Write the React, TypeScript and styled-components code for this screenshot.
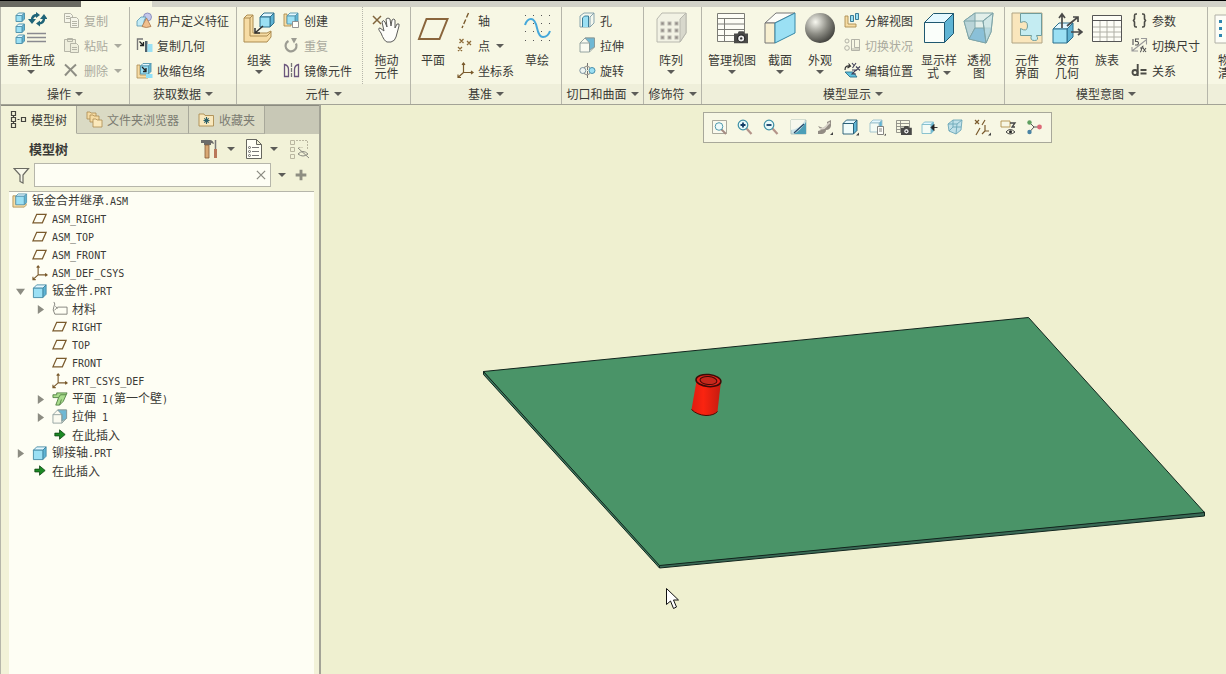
import React from 'react';
import styled, { createGlobalStyle, css } from 'styled-components';

const c = {
  ribbon: '#f7f7e4',
  ribbonLabel: '#efefda',
  canvas: '#eff0d0',
  panel: '#f2f2d8',
  tree: '#fefef4',
  text: '#3a3a36',
  muted: '#aaaa9e',
  line: '#b6b6aa',
  blue: '#9be0f4',
  blueDark: '#2b6f8c',
  gold: '#f6dca4',
  goldDark: '#ac8c50',
  brown: '#7a5a2c',
};

const Global = createGlobalStyle`
  *, *::before, *::after { box-sizing: border-box; }
  body { margin: 0; background: ${c.canvas}; color: ${c.text}; font: 12px/16px "Noto Sans CJK SC", sans-serif; }
  button, input { font: inherit; color: inherit; margin: 0; padding: 0; border: 0; background: none; }
  svg { display: block; flex: none; }
`;

const Page = styled.div`
  display: flex;
  flex-direction: column;
  min-height: 100vh;
  overflow: hidden;
`;
const Strip = styled.div`
  display: flex;
  height: 7px;
  background: #d2d2c8;
  border-top: 1px solid #000;
`;
const StripPart = styled.div<{ $w: number; $bg: string }>`
  width: ${p => p.$w}px;
  background: ${p => p.$bg};
`;
const Ribbon = styled.div`
  display: flex;
  height: 98px;
  background: ${c.ribbon};
  border-left: 1px solid ${c.line};
  border-bottom: 1px solid #a3a396;
  overflow: hidden;
`;
const GroupBox = styled.section<{ $w: number }>`
  flex: none;
  display: flex;
  flex-direction: column;
  width: ${p => p.$w}px;
  border-right: 1px solid ${c.line};
`;
const GroupBody = styled.div<{ $pad: number }>`
  display: flex;
  align-items: flex-start;
  height: 77px;
  padding-left: ${p => p.$pad}px;
`;
const GroupLabel = styled.button`
  display: flex;
  align-items: center;
  justify-content: center;
  gap: 4px;
  height: 20px;
  background: ${c.ribbonLabel};
  white-space: nowrap;
`;
const BigButton = styled.button<{ $w: number; $sep?: boolean }>`
  flex: none;
  display: flex;
  flex-direction: column;
  align-items: center;
  width: ${p => p.$w}px;
  height: 77px;
  padding-top: 5px;
  line-height: 13px;
  white-space: nowrap;
  ${p => p.$sep && css`border-left: 1px dotted ${c.line};`}
`;
const BigLabel = styled.span`
  margin: 9px 0 4px;
`;
const BigLine = styled.span`
  display: flex;
  align-items: center;
  justify-content: center;
  gap: 4px;
`;
const Column = styled.div<{ $w: number }>`
  flex: none;
  width: ${p => p.$w}px;
  margin-left: 4px;
  padding-top: 1px;
`;
const SmallButton = styled.button<{ $off?: boolean }>`
  display: flex;
  align-items: center;
  gap: 4px;
  height: 25px;
  white-space: nowrap;
  ${p => p.$off && css`color: ${c.muted};`}
`;
const Arrow = styled.span<{ $off?: boolean; $ml?: number }>`
  border: 4px solid transparent;
  border-top-color: ${p => (p.$off ? c.muted : '#5c5c58')};
  border-bottom: 0;
  margin-left: ${p => p.$ml || 0}px;
`;

const Work = styled.div`
  flex: 1;
  display: flex;
  min-height: 500px;
`;
const Side = styled.aside`
  flex: none;
  display: flex;
  flex-direction: column;
  width: 321px;
  background: ${c.panel};
  border-left: 1px solid ${c.line};
  border-right: 2px solid #a3a396;
`;
const Tabs = styled.div`
  display: flex;
  height: 29px;
  background: #c8c8b6;
  border-top: 1px solid #8c8c80;
`;
const Tab = styled.button<{ $w: number; $on?: boolean }>`
  display: flex;
  align-items: center;
  justify-content: center;
  gap: 4px;
  width: ${p => p.$w}px;
  color: ${p => (p.$on ? c.text : '#7c7c72')};
  background: ${p => (p.$on ? c.panel : '#dadac4')};
  border-right: 1px solid #a8a89a;
  border-bottom: 1px solid ${p => (p.$on ? c.panel : '#b4b4a6')};
  white-space: nowrap;
`;
const PanelHead = styled.div`
  display: flex;
  align-items: center;
  height: 29px;
  padding: 0 9px 0 28px;
`;
const PanelTitle = styled.h2`
  flex: 1;
  margin: 0;
  font-size: 13px;
  line-height: 16px;
`;
const ToolButton = styled.button`
  display: flex;
  align-items: center;
  gap: 8px;
  margin-left: 11px;
`;
const Search = styled.div`
  display: flex;
  align-items: center;
  height: 24px;
  gap: 2px;
  padding: 0 10px 0 12px;
`;
const Field = styled.label`
  flex: 1;
  display: flex;
  align-items: center;
  height: 24px;
  margin-left: 2px;
  padding-right: 2px;
  background: ${c.tree};
  border: 1px solid ${c.line};
`;
const Input = styled.input`
  flex: 1;
  min-width: 0;
  outline: 0;
`;
const SearchButton = styled.button`
  display: flex;
  align-items: center;
  justify-content: center;
  min-width: 17px;
`;
const Tree = styled.ul`
  flex: 1;
  margin: 4px 5px 0 8px;
  padding: 0;
  list-style: none;
  background: ${c.tree};
  border-top: 1px solid ${c.line};
`;
const TreeRow = styled.li<{ $level: number }>`
  display: flex;
  align-items: center;
  height: 18px;
  padding-left: ${p => (p.$level ? 3 + 20 * (p.$level - 1) : 3)}px;
  white-space: pre;
`;
const Toggle = styled.button`
  display: flex;
  width: 20px;
  padding-left: 4px;
`;
const TreeLabel = styled.span`
  margin-left: 4px;
`;
const Code = styled.span`
  font: 10px/16px "DejaVu Sans Mono", monospace;
`;
const Viewport = styled.main`
  flex: 1;
  position: relative;
  overflow: hidden;
  background: ${c.canvas};
`;
const Scene = styled.svg`
  position: absolute;
  inset: 0;
  width: 100%;
  height: 100%;
`;
const FloatBar = styled.div`
  position: absolute;
  left: 382px;
  top: 7px;
  display: flex;
  width: 349px;
  height: 31px;
  padding: 0 3px 0 2px;
  background: ${c.ribbon};
  border: 1px solid #a8a89a;
`;
const FloatButton = styled.button`
  flex: 1;
  display: flex;
  align-items: center;
  justify-content: center;
`;

const cube = (x: number, y: number, w: number, d: number, front = c.blue, s = c.blueDark) => (
  <g stroke={s} strokeLinejoin="round">
    <path d={`M${x} ${y + d}l${d} ${-d}h${w}l${-d} ${d}z`} fill="#e4f8ff" />
    <path d={`M${x + w} ${y + d}l${d} ${-d}v${w}l${-d} ${d}z`} fill="#5fb4d4" />
    <path d={`M${x} ${y + d}h${w}v${w}h${-w}z`} fill={front} />
  </g>
);
const soft = '#5596ae';
const camera = (
  <g>
    <path d="M0 3h3l1-2h4l1 2h3v8H0z" fill="#4a4a48" />
    <circle cx="6" cy="7" r="3" fill="#eee" stroke="#222" />
    <circle cx="6" cy="7" r="1" fill="#333" />
  </g>
);
const glass = (sign: string) => (
  <g fill="none">
    <path d="M9.500 9.500l5 5.500" stroke="#b4948a" strokeWidth="2.200" />
    <circle cx="6" cy="6" r="4.800" fill="#e8fafa" stroke="#3d8fa5" strokeWidth="1.200" />
    <path d={sign} stroke="#123c66" strokeWidth="1.800" />
  </g>
);

const small: Record<string, React.ReactNode> = {
  copy: <g fill="#f6f6ea" stroke="#aeaea0"><path d="M1.500 1.500h6l2 2v7h-8zM3 4.500h4M3 6.500h5" /><path d="M7.500 5.500h6l2 2v8h-8zM9 9.500h5M9 11.500h5M9 13.500h5" /></g>,
  paste: <g fill="#eeeedc" stroke="#aeaea0"><path d="M1.500 2.500h11v12h-11zM4.500 1.500h5v3h-5z" /><path d="M7.500 6.500h6l2 2v7h-8zM9 10.500h5M9 12.500h5" /></g>,
  del: <path d="M2 2.500C6 6 10 10 13.500 14M13 2.500C9 6 5 10 2 13.500" fill="none" stroke="#8e8e84" strokeWidth="2" />,
  udf: <g><circle cx="11.500" cy="5" r="4" fill="#c4c8ea" stroke="#7d80b4" strokeWidth=".8" /><path d="M1 9l4-4h5l-2 4v5H1z" fill="#c4ecf6" stroke={soft} strokeWidth=".8" /><path d="M10.500 6l4.500 8.500q-5 2-9 0z" fill="#f0bf8e" stroke="#a8764a" strokeWidth=".8" /></g>,
  copyGeo: <g fill="none"><path d="M1.500 13V2H7" stroke="#777" strokeWidth="1.400" /><path d="M3.500 4.500l4 4M7.500 5v3.500H4" stroke="#222" strokeWidth="1.300" /><path d="M9 4h2.500v11H9z" fill="#50606a" /><path d="M11.500 7h5v8h-5z" fill={c.blue} /></g>,
  shrink: <g><path d="M1 3h3v10h8v3H1z" fill={c.gold} stroke={c.goldDark} strokeWidth=".8" />{cube(4.500, 1.500, 8, 2.500, c.blue, soft)}<path d="M6 5l4 4M10 6v3.500H7" stroke="#222" strokeWidth="1.300" fill="none" /><path d="M10 12h6.500v4H10z" fill="#8fe0f8" /></g>,
  create: <g><path d="M1 2h3v9h4v3H1z" fill={c.gold} stroke={c.goldDark} />{cube(4, 1, 8, 3, c.blue, soft)}<path d="M9.500 9.500h6v6h-6z" fill="#fffffa" stroke="#888" /></g>,
  repeat: <g fill="none" stroke="#9c9c92" strokeWidth="2.200"><path d="M13 6.500A5.500 5.500 0 1 1 5.500 4" /><path d="M8 1h6l-3 5.500z" fill="#9c9c92" stroke="none" /></g>,
  mirror: <g fill="none" strokeWidth="1.300"><path d="M1.500 2.500q4 1 4 5v7h-4zM15.500 2.500q-4 1-4 5v7h4z" stroke="#6b567c" /><path d="M8.500 1v15" stroke="#777" strokeDasharray="4 1" /></g>,
  axis: <path d="M11.500 1L5 16" stroke={c.brown} strokeWidth="1.400" strokeDasharray="5 2" />,
  points: <path d="M2.500 2l4 4m0-4l-4 4M10 4l4 4m0-4l-4 4M1 10l4 4m0-4l-4 4" stroke="#8c6a38" strokeWidth="1.300" />,
  csys: <path d="M6.500 1v9.500H16M6.500 10.500L1.500 15M5 2.800l1.500-1.800L8 2.800M14 9l2 1.500L14 12M1 12.500V15.500h3" fill="none" stroke={c.brown} strokeWidth="1.200" />,
  plane: <path d="M5 3.500h10l-4 9H1z" fill="none" stroke={c.brown} strokeWidth="1.300" />,
  hole: <g stroke="#7a9aa6" strokeWidth=".9"><path d="M1 4l4-3h10v10l-4 4H1z" fill="#f4f8ee" /><path d="M3.500 15V6l2-2h4v11" fill={c.blue} stroke={c.blueDark} /><path d="M11 5l4-4" /><path d="M11 5v10" /></g>,
  extrude: <g stroke="#8a9a98" strokeWidth=".9"><path d="M1 6l5-5h9.500v9l-5 5H1z" fill="#fafaf0" /><path d="M6 1h9.500v9l-5 3V6z" fill="#6fb8d4" /><path d="M1 6h9.500v9" fill="none" /></g>,
  revolve: <g><circle cx="3.800" cy="8.500" r="3" fill="#f0f6f2" stroke="#6f8796" /><circle cx="13" cy="8.500" r="3" fill={c.blue} stroke="#3b85a4" /><path d="M8.500 1v15" stroke="#666" strokeDasharray="3 1" /><path d="M5 5.500q3-3 6 0M5 11.500q3 3 6 0" fill="none" stroke="#777" /></g>,
  explode: <g><path d="M1 4h3v8h8v3H1z" fill={c.gold} stroke={c.goldDark} /><path d="M6.500 3.500h3v6h-3zM11.500 1.500h3v6h-3z" fill={c.blue} stroke={c.blueDark} /></g>,
  state: <g fill="none" stroke="#aaaaa0"><circle cx="3" cy="4" r="2" /><circle cx="3" cy="11" r="2.300" /><path d="M7.500 2.500h8v11h-8zM10.500 2.500v8h5M7 12h8" /></g>,
  editPos: <g fill="none"><path d="M1 8q0-5 5-4M4.500 1.500l2 2.500-3 2" stroke="#333" strokeWidth="1.200" /><path d="M1 10h8l4 5H6z" fill="#5fc4e0" stroke={c.blueDark} /><path d="M8 1l2 2.500M12 1L8.500 6M12 4.500l4 4m0-4l-4 4M8 8h4l-4 4h4" stroke="#3e3e58" strokeWidth="1.100" /></g>,
  braces: <path d="M6 2H5Q3.500 2 3.500 3.500V7L2.500 8.500l1 1.500v3.500Q3.500 15 5 15h1M11 2h1q1.500 0 1.500 1.500V7l1 1.500-1 1.500v3.500Q13.500 15 12 15h-1" fill="none" stroke="#4c4c46" strokeWidth="1.600" />,
  dims: <g fill="none" stroke="#555" strokeWidth="1.100"><path d="M2 2v6M4 8h2.500q2-2 0-3.500H4.500V2H8M9 15q1 0 1.500-3t2-3M9 11h4M12 11l3 4m0-4l-3 4" /><path d="M1 10v4h6M1 14L15 3M10 1.500h5.500v6" stroke="#999" /></g>,
  relation: <g fill="none" stroke="#4c4c46" strokeWidth="1.900"><circle cx="4" cy="10.500" r="2.500" /><path d="M6.700 2v12M9.500 8h6M9.500 11.500h6" /></g>,
  asm: <g><path d="M1 3h3v9h9l2-1v2l-2 2H1z" fill={c.gold} stroke={c.goldDark} />{cube(4, 1, 9, 2.500, c.blue, soft)}</g>,
  part: cube(1.500, 2, 10, 3.500, c.blue, '#3c84a0'),
  material: <path d="M2 1q2 2 0 5t1 8h13V6.500H6L2.500 10M3.500 5.500L6 8" fill="none" stroke="#74746e" />,
  sheet: <g stroke="#4b7a3c" strokeWidth=".9"><path d="M5 2h11l-4 9-4 4H4l3-8H1V4h4z" fill="#a9dc8c" /><path d="M7 7l2-3h6M8 15l2-6" fill="none" /></g>,
  insert: <path d="M3 6.500h5V3l6 5-6 5V9.500H3z" fill="#1c8a24" stroke="#0c4212" strokeWidth=".8" />,
  treeTab: <g fill="none" stroke="#44443e" strokeWidth="1.200"><path d="M1.500.500h4v4h-4zM1.500 6.500h4v4h-4zM1.500 12.500h4v4h-4zM11.500 6.500h4v4h-4zM3.500 4.500v2M3.500 10.500v2M7.500 8.500h2" /></g>,
  folders: <g fill={c.gold} stroke={c.goldDark} strokeWidth=".8"><path d="M1 1h3l1 1h5v6H1z" /><path d="M4 4h3l1 1h5v6H4z" /><path d="M7 8h3l1 1h5v7H7z" fill="#fbe9bc" /></g>,
  favorite: <g><path d="M1 3h5l1 1.500h8.500V15H1z" fill="#f9e8bc" stroke={c.goldDark} /><path d="M8.500 6v7M5.500 9.500h6M6.300 7.300l4.400 4.400m0-4.400l-4.400 4.400" stroke="#2a5f68" strokeWidth="1.100" /></g>,
  funnel: <path d="M1 1.500h14.500L10 8v8l-3-1.500V8z" fill="#f8f8ea" stroke="#6a6a62" strokeWidth="1.200" />,
  close: <path d="M3.500 3.500l10 10m0-10l-10 10" stroke="#8a8a80" strokeWidth="1.500" />,
  plus: <path d="M8.500 2v13M2 8.500h13" stroke="#8e8e82" strokeWidth="3.500" />,
  fit: <g fill="none"><path d="M1.500 1.500h14v13h-14z" stroke="#a0a094" fill="#fafaee" /><path d="M10 10l5 5" stroke="#a48c82" strokeWidth="2" /><circle cx="8" cy="7.500" r="3.800" fill="#eefafa" stroke="#3d8fa5" /></g>,
  zoomIn: glass('M3.500 6h5M6 3.500v5'),
  zoomOut: glass('M3.500 6h5'),
  repaint: <g><path d="M1 1h15v14H1z" fill="#cfe6ea" stroke="#a8bcb8" /><path d="M1 1h14q-4 8-14 10z" fill="#f6f8ee" /><path d="M16 3v12H4q7-4 12-12z" fill="#4c9fb8" /><path d="M4 14l10-9" fill="none" stroke="#246" strokeWidth="1.200" /></g>,
  render: <g><path d="M11 3l4-2v6q-1 4-5 4 0 3-4 4H2v-3l3-1-3-4 5 2 4-3z" fill="#928c84" /><path d="M4 9.500q4 1 6-2t4-4" fill="none" stroke="#d8d2c8" strokeWidth="1.600" /><path d="M14 16l3-3v3z" fill="#444" /></g>,
  shade: <g>{cube(1, 1, 10.500, 3.500, '#f0fcfa', '#1f5870')}<path d="M14 16.500l3-3v3z" fill="#444" /></g>,
  saved: <g>{cube(1, 1, 9, 3, '#f4fbf4', '#9bc0cc')}<path d="M8.500 7.500h6v8h-6zM10 10h3M10 12h3" fill="#fffffa" stroke="#777774" /><path d="M15 16.500l2-2v2z" fill="#444" /></g>,
  viewMgr: <g><path d="M1.500 1.500h13v12h-13zM1.500 4.500h13M1.500 7.500h13M1.500 10.500h13M5.500 1.500v12" fill="none" stroke="#8a8a82" /><g transform="translate(6 6) scale(.9)">{camera}</g></g>,
  section: <g>{cube(1, 3, 9, 2.500, '#f4fbf4', '#7fbccc')}<path d="M10 8.500l3-3v6zM12 8.500h4.500" fill="#222" stroke="#222" /></g>,
  persp: <g stroke="#6ca7b8" strokeWidth=".9"><path d="M1 5l5-4h9l-1 10-5 4-7-3z" fill="#bfe0e8" /><path d="M1 5h9l5-4M10 5l-1 10M6 1v7l-4 4M6 8h8" fill="none" /></g>,
  datum: <g fill="none" stroke={c.brown} strokeWidth="1.200"><path d="M1 1l4 4m0-4L1 5M11 1L8 6M6 9l-4 7M11 6v6h4M11 12l-3 3" /><path d="M14 16.500l3-3v3z" fill="#444" stroke="none" /></g>,
  annot: <g fill="none"><path d="M1 2h9v6H1z" stroke="#b0904c" /><path d="M10 4h5l-3 4h3" stroke="#444" strokeWidth="1.300" /><path d="M6 13q4-5 9 0-5 4-9 0z" stroke="#333" /><circle cx="10.500" cy="12.800" r="1.500" fill="#222" /></g>,
  spin: <g><path d="M3.500 3.500L8 8l-4.500 5M8 8h6" stroke="#444" fill="none" /><circle cx="3.500" cy="3.500" r="2.200" fill="#5f9f60" /><circle cx="3.500" cy="13" r="2.200" fill="#4a83a4" /><circle cx="13.500" cy="8" r="2.400" fill="#dd6a78" /></g>,
};

const dotsX = [4, 12, 20, 28];
const dotsY = [3, 11, 19, 28];
const big: Record<string, React.ReactNode> = {
  regen: <g>{cube(1, 1, 6, 2.500, c.blue, soft)}{cube(1, 12, 6, 2.500, c.blue, soft)}{cube(1, 23, 6, 2.500, c.blue, soft)}<path d="M12 21.500h19M12 25.500h19M12 29.500h19" stroke="#8a8a90" strokeWidth="1.300" /><g fill="none" stroke="#1f6478" strokeWidth="2.400"><path d="M17 8q0-4.500 5-5M29 6q0 5-5 5.500" /></g><path d="M13 7h8l-4 5zM25 7l4-5 3.500 5zM21 0l4 3-4 3zM25 8.500l-4 3 4 3z" fill="#1f6478" /></g>,
  assemble: <g stroke={c.goldDark}><path d="M1 6l3-3h6v18h14l4-2v6l-4 5H1z" fill={c.gold} /><path d="M1 6h6l3-3M7 6v18h17l4-4" fill="none" />{cube(17, 1, 10, 4)}<path d="M20 14l-8 7m0-5v5h5" stroke="#333" strokeWidth="1.500" fill="none" /></g>,
  drag: <g transform="translate(1 0)"><path d="M1 4l8 8m0-8l-8 8" stroke="#80643c" strokeWidth="1.500" /><path d="M9 21q-4-5-1-5l4 3-2-9q1-3 3 0l2 5-1-8q2-2 4 0l1 7 1-6q2-2 3 0v8l2-4q3-1 2 2l-3 11q-1 4-5 5h-4q-3-1-6-9z" fill="#fdfdfa" stroke="#5c5c5a" /></g>,
  plane: <path d="M9.500 7h21l-8 20H2z" fill="none" stroke="#8a653c" strokeWidth="2" />,
  sketch: <g><g fill="#555">{dotsX.map(x => dotsY.map(y => <rect key={x + '-' + y} x={x} y={y} width="1" height="1" />))}</g><path d="M4 13q2-6 6-6 4 0 6 9 2 9 6 9 5 0 7-6" fill="none" stroke="#45a8da" strokeWidth="2" /></g>,
  pattern: <g stroke="#b8b8ae"><path d="M2 7l5-6h24v20l-6 9H2z" fill="#f2f2e4" /><path d="M25 7v23l6-9V1z" fill="#d8d8cc" />{[6, 13, 20].map(x => [10, 17, 24].map(y => <rect key={x + '-' + y} x={x} y={y} width="3" height="3" fill="#948c88" />))}</g>,
  views: <g><path d="M1.500 1.500h27v28h-27zM1.500 6.500h27M1.500 12h27M1.500 17.500h27M1.500 23.500h27M8.500 6.500v23" fill="#fdfdf6" stroke="#7c7c76" /><g transform="translate(18 18) scale(1.200)">{camera}</g></g>,
  section: <g stroke="#777" strokeLinejoin="round"><path d="M1 11L12 1h19L11 11z" fill="#fdfdf8" /><path d="M1 11h10v20H1z" fill="#f7efd0" /><path d="M11 11L31 1v20L11 31z" fill={c.blue} stroke="#3487a6" /></g>,
  ball: <circle cx="16" cy="16" r="15" fill="url(#ballShade)" />,
  display: cube(1.500, 1.500, 20, 9, '#fafefa', '#1f5870'),
  persp: <g stroke="#7fa5a8" strokeLinejoin="round"><path d="M1 9L12 1h18l-2 19-5 11L6 27z" fill="#e2efea" /><path d="M1 9L12 1v15L6 27z" fill="#b9d4d8" /><path d="M12 16h16l-5 15-17-4z" fill="#8ac0d8" /><path d="M20 9l10-8-2 19-5 11z" fill="#c9e4e4" fillOpacity=".7" /><path d="M1 9h19l10-8M20 9l3 22" fill="none" /></g>,
  puzzle: <g stroke="#b0a484"><path d="M1 1h30v30H1z" fill="#fae6bc" /><path d="M9.500 1.500h21v22h-5q3 5-2 5t-3-5h-11v-7q7 4 7-2.500t-7-3.500z" fill="#c4ecf2" stroke="#6f9c9c" /></g>,
  publish: <g>{cube(2, 11, 14, 6)}<path d="M11 16V3M8 6l3-4 3 4M16 14L27 5M22 5h5v5M20 20h11M27 17l4 3-4 3" fill="none" stroke="#4a4a48" strokeWidth="1.700" /></g>,
  table: <g fill="none"><path d="M2 3h28v27H2z" fill="#fdfdf6" /><path d="M2 15h28M2 20h28M2 25h28M9 8v22M16 8v22M23 8v22" stroke="#b0b0a6" /><path d="M1.500 3.500h29v26h-29zM1.500 8.500h29" stroke="#555" /></g>,
  bom: <g><path d="M1 3h30v28H1z" fill="#fdfdf6" stroke="#b0b0a6" /><path d="M5 8h3v3H5zM5 15h3v3H5zM5 22h3v3H5z" fill="#2f86b0" /><path d="M12 9.500h16M12 16.500h16M12 23.500h16" stroke="#777" /></g>,
};

const SmallIcon = ({ name, size = 17 }: { name: string; size?: number }) => (
  <svg width={size} height={size} viewBox="0 0 17 17" aria-hidden="true" strokeWidth=".9">{small[name]}</svg>
);

const Big = ({ icon, lines, w = 40, menu, tail, sep }: { icon: string; lines: string[]; w?: number; menu?: boolean; tail?: boolean; sep?: boolean }) => (
  <BigButton $w={w} $sep={sep}>
    <svg width="32" height="32" viewBox="0 0 32 32" aria-hidden="true">{big[icon]}</svg>
    <BigLabel>
      {lines.map((l, i) => <BigLine key={l}>{l}{tail && i === lines.length - 1 && <Arrow />}</BigLine>)}
    </BigLabel>
    {menu && <Arrow />}
  </BigButton>
);

type Item = [icon: string, label: string, off?: boolean, menu?: boolean];
const Stack = ({ items, w }: { items: Item[]; w: number }) => (
  <Column $w={w}>
    {items.map(([icon, label, off, menu]) => (
      <SmallButton key={label} $off={off} disabled={off}>
        <SmallIcon name={icon} />{label}{menu && <Arrow $off={off} $ml={2} />}
      </SmallButton>
    ))}
  </Column>
);

const Group = ({ label, w, pad = 2, children }: { label: string; w: number; pad?: number; children: React.ReactNode }) => (
  <GroupBox $w={w}>
    <GroupBody $pad={pad}>{children}</GroupBody>
    <GroupLabel>{label}{label && <Arrow />}</GroupLabel>
  </GroupBox>
);

type Node = [level: number, icon: string, label: string, toggle?: 'open' | 'closed'];
const nodes: Node[] = [
  [0, 'asm', '钣金合并继承.ASM'],
  [1, 'plane', 'ASM_RIGHT'],
  [1, 'plane', 'ASM_TOP'],
  [1, 'plane', 'ASM_FRONT'],
  [1, 'csys', 'ASM_DEF_CSYS'],
  [1, 'part', '钣金件.PRT', 'open'],
  [2, 'material', '材料', 'closed'],
  [2, 'plane', 'RIGHT'],
  [2, 'plane', 'TOP'],
  [2, 'plane', 'FRONT'],
  [2, 'csys', 'PRT_CSYS_DEF'],
  [2, 'sheet', '平面 1(第一个壁)', 'closed'],
  [2, 'extrude', '拉伸 1', 'closed'],
  [2, 'insert', '在此插入'],
  [1, 'part', '铆接轴.PRT', 'closed'],
  [1, 'insert', '在此插入'],
];

const Mixed = ({ text }: { text: string }) => (
  <TreeLabel>{text.split(/([\x20-\x7e]+)/).map((t, i) => (i % 2 ? <Code key={i}>{t}</Code> : t))}</TreeLabel>
);

const floatTools: [string, string][] = [
  ['fit', '重新调整'], ['zoomIn', '放大'], ['zoomOut', '缩小'], ['repaint', '重画'], ['render', '渲染'],
  ['shade', '显示样式'], ['saved', '已保存方向'], ['viewMgr', '视图管理器'], ['section', '截面'], ['persp', '透视图'],
  ['datum', '基准显示'], ['annot', '注释显示'], ['spin', '旋转中心'],
];

export default function App() {
  return (
    <Page>
      <Global />
      <Strip>
        <StripPart $w={81} $bg="#6a6a62" />
        <StripPart $w={71} $bg={c.ribbon} />
      </Strip>
      <Ribbon>
        <Group label="操作" w={129}>
          <Big icon="regen" lines={['重新生成']} w={56} menu />
          <Stack w={60} items={[['copy', '复制', true], ['paste', '粘贴', true, true], ['del', '删除', true, true]]} />
        </Group>
        <Group label="获取数据" w={107}>
          <Stack w={96} items={[['udf', '用户定义特征'], ['copyGeo', '复制几何'], ['shrink', '收缩包络']]} />
        </Group>
        <Group label="元件" w={174}>
          <Big icon="assemble" lines={['组装']} menu />
          <Stack w={79} items={[['create', '创建'], ['repeat', '重复', true], ['mirror', '镜像元件']]} />
          <Big icon="drag" lines={['拖动', '元件']} w={48} sep />
        </Group>
        <Group label="基准" w={151}>
          <Big icon="plane" lines={['平面']} />
          <Stack w={60} items={[['axis', '轴'], ['points', '点', false, true], ['csys', '坐标系']]} />
          <Big icon="sketch" lines={['草绘']} />
        </Group>
        <Group label="切口和曲面" w={82} pad={13}>
          <Stack w={60} items={[['hole', '孔'], ['extrude', '拉伸'], ['revolve', '旋转']]} />
        </Group>
        <Group label="修饰符" w={58} pad={7}>
          <Big icon="pattern" lines={['阵列']} menu />
        </Group>
        <Group label="模型显示" w={303}>
          <Big icon="views" lines={['管理视图']} w={56} menu />
          <Big icon="section" lines={['截面']} menu />
          <Big icon="ball" lines={['外观']} menu />
          <Stack w={75} items={[['explode', '分解视图'], ['state', '切换状况', true], ['editPos', '编辑位置']]} />
          <Big icon="display" lines={['显示样', '式']} tail />
          <Big icon="persp" lines={['透视', '图']} />
        </Group>
        <Group label="模型意图" w={203}>
          <Big icon="puzzle" lines={['元件', '界面']} />
          <Big icon="publish" lines={['发布', '几何']} />
          <Big icon="table" lines={['族表']} />
          <Stack w={70} items={[['braces', '参数'], ['dims', '切换尺寸'], ['relation', '关系']]} />
        </Group>
        <Group label="" w={60}>
          <Big icon="bom" lines={['物料', '清单']} />
        </Group>
      </Ribbon>
      <Work>
        <Side>
          <Tabs>
            <Tab $w={76} $on><SmallIcon name="treeTab" />模型树</Tab>
            <Tab $w={112}><SmallIcon name="folders" />文件夹浏览器</Tab>
            <Tab $w={76}><SmallIcon name="favorite" />收藏夹</Tab>
          </Tabs>
          <PanelHead>
            <PanelTitle>模型树</PanelTitle>
            <ToolButton aria-label="设置">
              <svg width="18" height="20" viewBox="0 0 18 20"><path d="M0 1h9q3 0 4 4l-3-1v2H3V4H0z" fill="#6c6c6a" /><path d="M4 6h4v13H4z" fill="#d8a874" stroke="#855a38" strokeWidth=".8" /><path d="M14.500 1v9" stroke="#777" strokeWidth="1.500" /><path d="M13 10h3v9h-3z" fill="#b9785a" /></svg>
              <Arrow />
            </ToolButton>
            <ToolButton aria-label="显示">
              <svg width="16" height="20" viewBox="0 0 16 20"><path d="M.5.500h10l5 5v14H.500zM10.500.500v5h5" fill="#fffff6" stroke="#66665f" /><path d="M6 8.500h7M6 12.500h7M6 16.500h7" stroke="#777" /><g fill="none" stroke="#666"><circle cx="3.500" cy="8.500" r="1" /><circle cx="3.500" cy="12.500" r="1" /><circle cx="3.500" cy="16.500" r="1" /></g></svg>
              <Arrow />
            </ToolButton>
            <ToolButton aria-label="隐藏项">
              <svg width="21" height="20" viewBox="0 0 21 20" fill="none" stroke="#bab6a0"><path d="M1.500 1.500h4v4h-4zM1.500 8.500h4v4h-4zM1.500 15.500h4v4h-4z" /><path d="M7 1.500h11M18.500 2v8M9.500 8.500h4" strokeDasharray="2 1" /><path d="M9 15q5-5 10 0-5 4-10 0zM9 9l11 10" stroke="#8a8a80" /></svg>
            </ToolButton>
          </PanelHead>
          <Search>
            <SmallIcon name="funnel" />
            <Field>
              <Input aria-label="筛选模型树" />
              <SmallIcon name="close" size={14} />
            </Field>
            <SearchButton aria-label="筛选选项"><Arrow /></SearchButton>
            <SearchButton aria-label="添加"><SmallIcon name="plus" size={14} /></SearchButton>
          </Search>
          <Tree>
            {nodes.map(([level, icon, label, toggle], i) => (
              <TreeRow key={i} $level={level}>
                {level > 0 && (toggle ? (
                  <Toggle aria-label={label}>
                    <svg width="9" height="9" viewBox="0 0 10 10"><path d={toggle === 'open' ? 'M0 2h10L5 9z' : 'M2 0l7 5-7 5z'} fill="#8c8c82" /></svg>
                  </Toggle>
                ) : <Toggle as="span" />)}
                <SmallIcon name={icon} size={16} />
                <Mixed text={label} />
              </TreeRow>
            ))}
          </Tree>
        </Side>
        <Viewport>
          <Scene viewBox="321 105 905 569" preserveAspectRatio="xMinYMin slice" aria-label="模型视图">
            <defs>
              <radialGradient id="ballShade" cx=".35" cy=".3" r=".8">
                <stop offset="0" stopColor="#f8f8f0" />
                <stop offset=".5" stopColor="#8e8e86" />
                <stop offset="1" stopColor="#343430" />
              </radialGradient>
              <linearGradient id="pin"><stop offset="0" stopColor="#e01c10" /><stop offset=".4" stopColor="#fa2410" /><stop offset="1" stopColor="#c41c10" /></linearGradient>
            </defs>
            <g stroke="#12261e" strokeLinejoin="round">
              <path d="M483.500 371.500v3l176 193.500v-3z" fill="#3d7c60" />
              <path d="M659.500 565l545-53v4l-545 52z" fill="#3a6a56" />
              <path d="M483.500 371.500L1028.500 317.500 1204.500 512.500 659.500 565.500z" fill="#4a9468" />
            </g>
            <path d="M696.500 381L691.500 409.500Q697 415 706 415.500 714 415.500 717.500 411.500L721 381z" fill="url(#pin)" />
            <path d="M691.500 409.500Q697 415 706 415.500 714 415.500 717.500 411.500" fill="none" stroke="#4a0a04" />
            <ellipse cx="708.500" cy="380.500" rx="12.500" ry="6" fill="#e0241a" stroke="#3c0a06" strokeWidth="1.500" transform="rotate(5 708 380)" />
            <ellipse cx="708.500" cy="380.500" rx="8.500" ry="4" fill="#c4281c" stroke="#3c0a06" transform="rotate(5 708 380)" />
            <path d="M666.500 588.500v16l4-3.500 3 7.500 3-1.500-3-7h5z" fill="#fff" stroke="#111" />
          </Scene>
          <FloatBar>
            {floatTools.map(([icon, label]) => <FloatButton key={icon} aria-label={label}><SmallIcon name={icon} /></FloatButton>)}
          </FloatBar>
        </Viewport>
      </Work>
    </Page>
  );
}
